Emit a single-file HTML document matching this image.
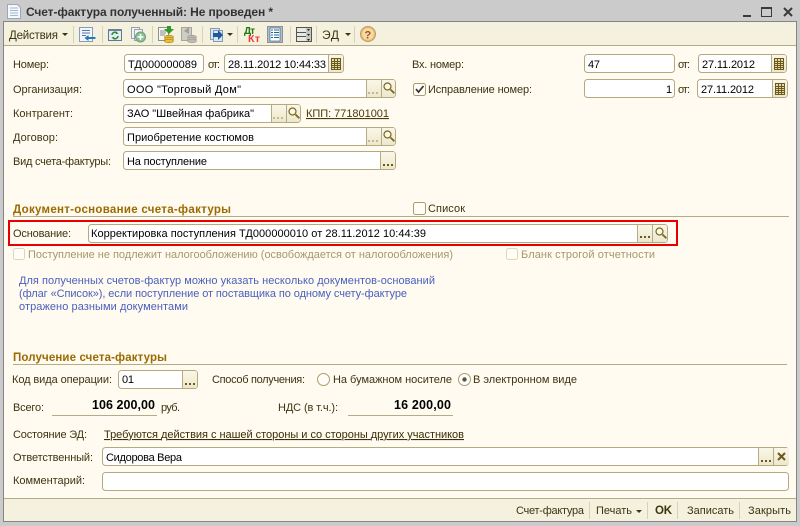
<!DOCTYPE html>
<html lang="ru"><head><meta charset="utf-8"><title>Счет-фактура</title>
<style>
html,body{margin:0;padding:0;background:#cbcbcb;width:800px;height:526px;overflow:hidden}
svg{display:block}
text{font-family:"Liberation Sans",sans-serif;font-size:11px;fill:#3d3410;white-space:pre}
.v{fill:#000}
.h{font-weight:bold;fill:#9b6a00;font-size:11.5px}
.d{fill:#a6976d}
.b{fill:#4a5fbe}
.n{font-weight:bold;fill:#000;font-size:12.5px}
.f{fill:none;stroke:#b5a97f}
.fw{fill:#fff;stroke:#b5a97f}
.s{stroke:#d8d2b4;stroke-width:1}
.l{stroke:#b5ab85;stroke-width:1}
</style></head><body>
<svg width="800" height="526" viewBox="0 0 800 526" xmlns="http://www.w3.org/2000/svg">
<defs>
<linearGradient id="g" x1="0" y1="0" x2="0" y2="1"><stop offset="0" stop-color="#faf7e8"/><stop offset="1" stop-color="#ece7cc"/></linearGradient>
<g id="dots"><rect x="0" y="0" width="2" height="2" fill="#6b5a20"/><rect x="4" y="0" width="2" height="2" fill="#6b5a20"/><rect x="8" y="0" width="2" height="2" fill="#6b5a20"/></g>
<g id="dotsd"><rect x="0" y="0" width="2" height="2" fill="#c4b98f"/><rect x="4" y="0" width="2" height="2" fill="#c4b98f"/><rect x="8" y="0" width="2" height="2" fill="#c4b98f"/></g>
<g id="mag"><circle cx="4.500" cy="4.500" r="3.500" fill="#fbf8e4" stroke="#7a6520" stroke-width="1.200"/><path d="M7.500 7.500l3.800 3.800" stroke="#7a6520" stroke-width="1.800" fill="none"/></g>
<g id="cal"><rect x=".5" y=".5" width="9" height="11" fill="#e6dba8" stroke="#6b5a20"/><path d="M1 3.500h8M1 5.500h8M1 7.500h8M1 9.500h8M3.500 1v10M6.500 1v10" stroke="#6b5a20" stroke-width="1" fill="none"/></g>
<g id="arr"><path d="M0 0h6l-3 3z" fill="#3d3410"/></g>
</defs>

<!-- window frame -->
<rect width="800" height="526" fill="#cbcbcb"/>
<rect x="3.500" y="21.500" width="793" height="500" fill="#fffbf0" stroke="#858585"/>
<rect x="4" y="22" width="792" height="23" fill="#f4f1de"/>
<path d="M4 45.500h792" stroke="#b5ab85"/>
<rect x="4" y="499" width="792" height="22" fill="#f4f1de"/>
<path d="M4 498.500h792" stroke="#b5ab85"/>

<!-- title -->
<path d="M7.500 4.500h10l3 3v11h-13z" fill="#f4f7fb" stroke="#9aa8bc"/>
<path d="M10 8h8M10 10.500h8M10 13h8M10 15.500h8" stroke="#a9b8cc"/>
<text x="26" y="16" textLength="247" style="font-weight:bold;font-size:12px;fill:#333">Счет-фактура полученный: Не проведен *</text>
<rect x="743" y="15" width="8" height="2" fill="#3a3a3a"/>
<rect x="761.500" y="7.500" width="10" height="9" fill="none" stroke="#3a3a3a"/><rect x="761" y="7" width="11" height="2" fill="#3a3a3a"/>
<path d="M784 8l8 8M792 8l-8 8" stroke="#3a3a3a" stroke-width="2"/>

<!-- toolbar -->
<text x="9" y="39" textLength="49" style="font-size:11.500px">Действия</text>
<use href="#arr" x="62" y="33"/>
<path class="s" d="M73.500 26v17M102.500 26v17M152.500 26v17M202.500 26v17M237.500 26v17M290.500 26v17M316.500 26v17M354.500 26v17"/>
<!-- icon 1 -->
<rect x="79.500" y="27.500" width="13" height="14" fill="#f2f5fa" stroke="#8a9cb8"/>
<path d="M82 30.500h8M82 33h8M82 35.500h4" stroke="#5a7aa8"/>
<path d="M95.500 37h-7v-2l-4 3 4 3v-2h7z" fill="#2a78b8"/>
<!-- icon 2 -->
<rect x="108.500" y="29.500" width="13" height="11" fill="#e4edf2" stroke="#66778c"/>
<rect x="108" y="29" width="14" height="2" fill="#6f8196"/>
<path d="M112 35a3 3 0 0 1 5-2M118 36a3 3 0 0 1-5 2" fill="none" stroke="#2e8a3a" stroke-width="1.500"/>
<path d="M116 31.500l2.500 2-2.800.8zM114 39.500l-2.500-2 2.800-.8z" fill="#2e8a3a"/>
<!-- icon 3 -->
<rect x="131.500" y="27.500" width="8" height="11" fill="#f2f4f6" stroke="#97a3a8"/>
<rect x="134.500" y="29.500" width="8" height="11" fill="#f2f4f6" stroke="#97a3a8"/>
<circle cx="140.500" cy="37" r="5" fill="#8cc09a" stroke="#6f9d7a"/><path d="M140.500 34v6M137.500 37h6" stroke="#fff" stroke-width="1.500"/>
<!-- icon 4 -->
<rect x="158.500" y="27.500" width="10" height="13" fill="#fbf8e8" stroke="#8a8f98"/>
<path d="M160 31h6M160 33h6M160 35h5" stroke="#7f8a9c"/>
<path d="M167 26h4v3h3l-5 5-5-5h3z" fill="#2f9a2a"/>
<ellipse cx="169" cy="37" rx="4.500" ry="1.800" fill="#efbd3a" stroke="#a67b12" stroke-width=".6"/>
<ellipse cx="169" cy="39" rx="4.500" ry="1.800" fill="#efbd3a" stroke="#a67b12" stroke-width=".6"/>
<ellipse cx="169" cy="41" rx="4.500" ry="1.800" fill="#efbd3a" stroke="#a67b12" stroke-width=".6"/>
<!-- icon 5 (disabled) -->
<rect x="181.500" y="27.500" width="10" height="13" fill="#cfcdc4" stroke="#a8a69c"/>
<path d="M189 27l-5 4 5 3z" fill="#a09e96"/>
<ellipse cx="192" cy="37" rx="4.500" ry="1.800" fill="#bdbbb0" stroke="#999" stroke-width=".6"/>
<ellipse cx="192" cy="39" rx="4.500" ry="1.800" fill="#bdbbb0" stroke="#999" stroke-width=".6"/>
<ellipse cx="192" cy="41" rx="4.500" ry="1.800" fill="#bdbbb0" stroke="#999" stroke-width=".6"/>
<!-- icon 6 -->
<rect x="210.500" y="28.500" width="9" height="11" fill="#dbe6f4" stroke="#8a9ab4"/>
<rect x="213.500" y="30.500" width="9" height="11" fill="#dbe6f4" stroke="#8a9ab4"/>
<path d="M213 33h5v-3l5 5-5 5v-3h-5z" fill="#1e5a9c"/>
<use href="#arr" x="227" y="33"/>
<!-- Дт Кт -->
<text x="244" y="34" style="font-weight:bold;font-size:10px;fill:#1f7a12" textLength="11">Дт</text>
<text x="248" y="42" style="font-weight:bold;font-size:10.500px;fill:#f03a3a" textLength="12">Кт</text>
<!-- icon journal -->
<rect x="267.500" y="26.500" width="15" height="16" fill="#b8bcc2" stroke="#8e9298"/>
<rect x="270" y="28" width="10" height="13" fill="#fff" stroke="#1a5a8a" stroke-width=".6"/>
<path d="M271 30h2M274 30h5M271 32.500h2M274 32.500h5M271 35h2M274 35h5M271 37.500h2M274 37.500h5" stroke="#1a6a96"/>
<!-- stack -->
<rect x="296.500" y="27.500" width="15" height="14" fill="#e8e8e4" stroke="#55554f"/>
<path d="M296 32.500h15M296 36.500h15" stroke="#55554f"/>
<rect x="306" y="27" width="5" height="15" fill="#c6c6c0"/>
<path d="M307 29h3l-1.500 2zM307 34h3l-1.500 2zM307 39h3l-1.500 2z" fill="#222"/>
<path d="M296.500 27.500h15v14h-15z" fill="none" stroke="#55554f"/>
<text x="322" y="39" textLength="17" style="font-size:12px">ЭД</text>
<use href="#arr" x="345" y="33"/>
<!-- help -->
<circle cx="368" cy="34" r="7.500" fill="#f4b86a" stroke="#b0a078"/>
<circle cx="368" cy="34" r="5.800" fill="#fbd9a2"/>
<text x="364.500" y="38.500" style="font-weight:bold;font-size:11px;fill:#8a5a20">?</text>

<!-- Row 1 -->
<text x="13" y="68" textLength="36">Номер:</text>
<rect class="fw" x="124.500" y="54.500" width="79" height="18" rx="3"/>
<text class="v" x="128" y="68" textLength="69">ТД000000089</text>
<text x="208" y="68" textLength="12">от:</text>
<rect class="fw" x="224.500" y="54.500" width="119" height="18" rx="3"/>
<path d="M328 55h13a2 2 0 0 1 2 2v13a2 2 0 0 1-2 2h-13z" fill="url(#g)"/><path class="l" d="M328.500 55v17"/>
<use href="#cal" x="331" y="58"/>
<text class="v" x="228" y="68" textLength="98">28.11.2012 10:44:33</text>
<text x="412" y="68" textLength="52">Вх. номер:</text>
<rect class="fw" x="584.500" y="54.500" width="90" height="18" rx="3"/>
<text class="v" x="588" y="68" textLength="12">47</text>
<text x="678" y="68" textLength="12">от:</text>
<rect class="fw" x="698.500" y="54.500" width="88" height="18" rx="3"/>
<path d="M771 55h13a2 2 0 0 1 2 2v13a2 2 0 0 1-2 2h-13z" fill="url(#g)"/><path class="l" d="M771.500 55v17"/>
<use href="#cal" x="774" y="58"/>
<text class="v" x="702" y="68" textLength="53">27.11.2012</text>

<!-- Row 2 -->
<text x="13" y="93" textLength="69">Организация:</text>
<rect class="fw" x="123.500" y="79.500" width="272" height="18" rx="3"/>
<path d="M366 80h27a2 2 0 0 1 2 2v13a2 2 0 0 1-2 2h-27z" fill="url(#g)"/><path class="l" d="M366.500 80v17M381.500 80v17"/>
<use href="#dotsd" x="368" y="92"/><use href="#mag" x="383" y="82"/>
<text class="v" x="127" y="93" textLength="114">ООО "Торговый Дом"</text>
<rect x="413.500" y="83.500" width="12" height="12" rx="2" fill="#fffdf4" stroke="#a89c70"/>
<path d="M416 89l2.500 3 5-6" fill="none" stroke="#333" stroke-width="1.700"/>
<text x="428" y="93" textLength="104">Исправление номер:</text>
<rect class="fw" x="584.500" y="79.500" width="90" height="18" rx="3"/>
<text class="v" x="666" y="93">1</text>
<text x="678" y="93" textLength="12">от:</text>
<rect class="fw" x="697.500" y="79.500" width="90" height="18" rx="3"/>
<path d="M772 80h13a2 2 0 0 1 2 2v13a2 2 0 0 1-2 2h-13z" fill="url(#g)"/><path class="l" d="M772.500 80v17"/>
<use href="#cal" x="775" y="83"/>
<text class="v" x="701" y="93" textLength="53">27.11.2012</text>

<!-- Row 3 -->
<text x="13" y="117" textLength="60">Контрагент:</text>
<rect class="fw" x="123.500" y="104.500" width="177" height="18" rx="3"/>
<path d="M271 105h27a2 2 0 0 1 2 2v13a2 2 0 0 1-2 2h-27z" fill="url(#g)"/><path class="l" d="M271.500 105v17M286.500 105v17"/>
<use href="#dotsd" x="273" y="117"/><use href="#mag" x="288" y="107"/>
<text class="v" x="127" y="117" textLength="127">ЗАО "Швейная фабрика"</text>
<text x="306" y="117" textLength="83" style="text-decoration:underline;fill:#4a3a08">КПП: 771801001</text>

<!-- Row 4 -->
<text x="13" y="141" textLength="45">Договор:</text>
<rect class="fw" x="123.500" y="127.500" width="272" height="18" rx="3"/>
<path d="M366 128h27a2 2 0 0 1 2 2v13a2 2 0 0 1-2 2h-27z" fill="url(#g)"/><path class="l" d="M366.500 128v17M381.500 128v17"/>
<use href="#dotsd" x="368" y="140"/><use href="#mag" x="383" y="130"/>
<text class="v" x="127" y="141" textLength="127">Приобретение костюмов</text>

<!-- Row 5 -->
<text x="13" y="165" textLength="98">Вид счета-фактуры:</text>
<rect class="fw" x="123.500" y="151.500" width="272" height="18" rx="3"/>
<path d="M380 152h13a2 2 0 0 1 2 2v13a2 2 0 0 1-2 2h-13z" fill="url(#g)"/><path class="l" d="M380.500 152v17"/>
<use href="#dots" x="383" y="164"/>
<text class="v" x="127" y="165" textLength="80">На поступление</text>

<!-- Section 1 -->
<text class="h" x="13" y="213" textLength="218">Документ-основание счета-фактуры</text>
<path class="l" d="M13 216.500h776"/>
<rect x="413.500" y="202.500" width="12" height="12" rx="2" fill="#fffdf4" stroke="#a89c70"/>
<text x="428" y="212" textLength="37">Список</text>

<rect x="9" y="221" width="668" height="24" fill="none" stroke="#e60000" stroke-width="2"/>
<text x="13" y="237" textLength="58">Основание:</text>
<rect class="fw" x="88.500" y="224.500" width="579" height="18" rx="3"/>
<path d="M637 225h28a2 2 0 0 1 2 2v13a2 2 0 0 1-2 2h-28z" fill="url(#g)"/><path class="l" d="M637.500 225v17M652.500 225v17"/>
<use href="#dots" x="640" y="236"/><use href="#mag" x="655" y="227"/>
<text class="v" x="91" y="237" textLength="335">Корректировка поступления ТД000000010 от 28.11.2012 10:44:39</text>

<rect x="13.500" y="248.500" width="11" height="11" rx="2" fill="#fffdf4" stroke="#dcd6bc"/>
<text class="d" x="28" y="258" textLength="425">Поступление не подлежит налогообложению (освобождается от налогообложения)</text>
<rect x="506.500" y="248.500" width="11" height="11" rx="2" fill="#fffdf4" stroke="#dcd6bc"/>
<text class="d" x="521" y="258" textLength="134">Бланк строгой отчетности</text>

<text class="b" x="19" y="284" textLength="416">Для полученных счетов-фактур можно указать несколько документов-оснований</text>
<text class="b" x="19" y="297" textLength="388">(флаг «Список»), если поступление от поставщика по одному счету-фактуре</text>
<text class="b" x="19" y="310" textLength="169">отражено разными документами</text>

<!-- Section 2 -->
<text class="h" x="13" y="361" textLength="154">Получение счета-фактуры</text>
<path class="l" d="M13 364.500h774"/>
<text x="12" y="383" textLength="100">Код вида операции:</text>
<rect class="fw" x="118.500" y="370.500" width="79" height="18" rx="3"/>
<path d="M182 371h13a2 2 0 0 1 2 2v13a2 2 0 0 1-2 2h-13z" fill="url(#g)"/><path class="l" d="M182.500 371v17"/>
<use href="#dots" x="185" y="383"/>
<text class="v" x="122" y="383" textLength="12">01</text>
<text x="212" y="383" textLength="93">Способ получения:</text>
<circle cx="323.500" cy="379.500" r="6" fill="#fffdf4" stroke="#a89c70"/>
<text x="333" y="383" textLength="119">На бумажном носителе</text>
<circle cx="464.500" cy="379.500" r="6" fill="#fffdf4" stroke="#a89c70"/>
<circle cx="464.500" cy="379.500" r="2.200" fill="#555"/>
<text x="473" y="383" textLength="104">В электронном виде</text>

<text x="13" y="411" textLength="31">Всего:</text>
<path class="l" d="M52 415.500h105"/>
<text class="n" x="92" y="409" textLength="63">106 200,00</text>
<text x="161" y="411" textLength="19">руб.</text>
<text x="278" y="411" textLength="60">НДС (в т.ч.):</text>
<path class="l" d="M348 415.500h105"/>
<text class="n" x="394" y="409" textLength="57">16 200,00</text>

<text x="13" y="438" textLength="74">Состояние ЭД:</text>
<text x="104" y="438" textLength="360" style="text-decoration:underline;fill:#3a2c04">Требуются действия с нашей стороны и со стороны других участников</text>

<text x="13" y="461" textLength="80">Ответственный:</text>
<rect class="fw" x="102.500" y="447.500" width="686" height="18" rx="3"/>
<path d="M758 448h29a2 2 0 0 1 2 2v13a2 2 0 0 1-2 2h-29z" fill="url(#g)"/><path class="l" d="M758.500 448v17M773.500 448v17"/>
<use href="#dots" x="761" y="460"/>
<path d="M778 453l7 7M785 453l-7 7" stroke="#6b5a20" stroke-width="2"/>
<text class="v" x="106" y="461" textLength="76">Сидорова Вера</text>

<text x="13" y="484" textLength="72">Комментарий:</text>
<rect class="fw" x="102.500" y="472.500" width="686" height="18" rx="3"/>

<!-- Footer -->
<text x="516" y="514" textLength="68">Счет-фактура</text>
<path class="s" d="M589.500 502v17M647.500 502v17M677.500 502v17M739.500 502v17"/>
<text x="596" y="514" textLength="36">Печать</text>
<use href="#arr" x="636" y="510"/>
<text x="655" y="514" textLength="17" style="font-weight:bold;font-size:11.500px">OK</text>
<text x="687" y="514" textLength="47">Записать</text>
<text x="748" y="514" textLength="43">Закрыть</text>
</svg>
</body></html>
